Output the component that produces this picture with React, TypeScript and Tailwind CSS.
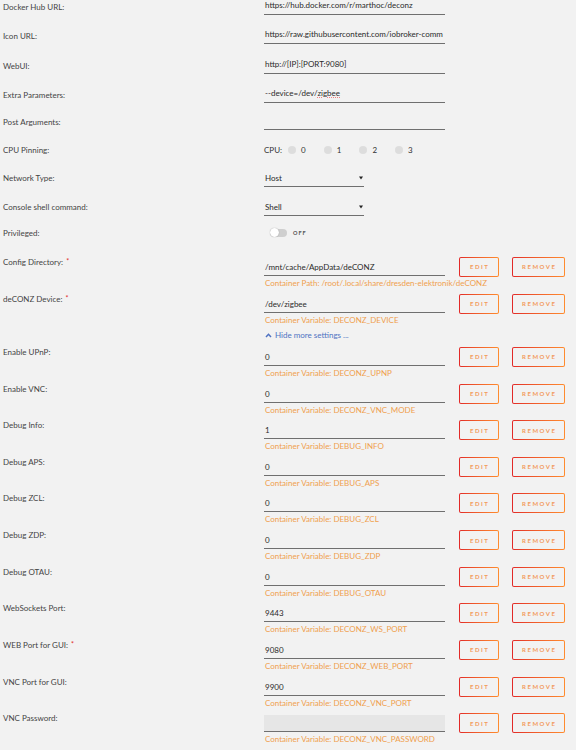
import React from "react";

const font = { fontFamily: "Lato, 'Open Sans', sans-serif" };

function TopRow({ label, value, h, squiggle }: { label: string; value: string; h: number; squiggle?: string }) {
  return (
    <div className="flex items-start" style={{ height: h }}>
      <div className="w-[264px] shrink-0 pl-[3px] text-[8px] leading-[14px] text-[#444]">{label}</div>
      <div className="w-[181px] h-[15px] border-b border-[#6f6f6f] pl-px text-[8px] leading-[11px] text-[#2a2a2a] whitespace-nowrap overflow-hidden">
        {value}
        {squiggle && <span className="underline decoration-dotted decoration-[#f08080]">{squiggle}</span>}
      </div>
    </div>
  );
}

function Btn({ text, w }: { text: string; w: number }) {
  return (
    <div className="rounded-[2px] bg-gradient-to-r from-[#e22828] to-[#ff8c2f] p-px h-[20px]" style={{ width: w }}>
      <div className="h-full w-full rounded-[1px] bg-[#f2f2f2] flex items-center justify-center">
        <span className="text-[6px] font-bold tracking-[1.5px] text-[#f29a5c] pl-[1.5px]">{text}</span>
      </div>
    </div>
  );
}

function VarRow({
  label,
  value,
  note,
  required,
  h = 36.63,
  password,
}: {
  label: string;
  value: string;
  note: string;
  required?: boolean;
  h?: number;
  password?: boolean;
}) {
  return (
    <div className="flex items-start" style={{ height: h }}>
      <div className="w-[264px] shrink-0 pl-[3px] text-[8px] leading-[10px] text-[#444]">
        {label}
        {required && <span className="ml-[3px] text-[7px] text-[#e22828] relative -top-[1px]">*</span>}
      </div>
      <div className="w-[181px] shrink-0 flex flex-col">
        {password ? (
          <div className="mt-[2px] h-[17px] bg-[#e6e6e6] border-b border-[#6f6f6f]"></div>
        ) : (
          <div className="h-[19px] border-b border-[#6f6f6f] pl-px pt-[4px] text-[8px] leading-[13px] text-[#2a2a2a] whitespace-nowrap">
            {value}
          </div>
        )}
        <div className="pl-px text-[8px] leading-[15px] text-[#f0a04e] whitespace-nowrap">{note}</div>
      </div>
      <div className="ml-[14px] flex gap-[13px]">
        <Btn text="EDIT" w={40} />
        <Btn text="REMOVE" w={53} />
      </div>
    </div>
  );
}

function CpuItem({ n }: { n: string }) {
  return (
    <div className="w-[35.7px] flex items-center gap-[5px] shrink-0">
      <div className="w-[8px] h-[8px] rounded-full bg-[#dddddd]"></div>
      <span className="text-[8px] text-[#333]">{n}</span>
    </div>
  );
}

function SelectRow({ label, value, h }: { label: string; value: string; h: number }) {
  return (
    <div className="flex items-start" style={{ height: h }}>
      <div className="w-[264px] shrink-0 pl-[3px] text-[8px] leading-[14px] text-[#444]">{label}</div>
      <div className="w-[100px] h-[16px] border-b border-[#6f6f6f] pl-px flex items-start justify-between text-[8px] leading-[14px] text-[#2a2a2a]">
        <span>{value}</span>
        <svg width="4" height="4" viewBox="0 0 4 4" className="mt-[5px] mr-[1px]">
          <path d="M0 0.5 L4 0.5 L2 3.5 Z" fill="#222" />
        </svg>
      </div>
    </div>
  );
}

export default function App() {
  const vars = [
    { label: "Enable UPnP:", value: "0", note: "Container Variable: DECONZ_UPNP" },
    { label: "Enable VNC:", value: "0", note: "Container Variable: DECONZ_VNC_MODE" },
    { label: "Debug Info:", value: "1", note: "Container Variable: DEBUG_INFO" },
    { label: "Debug APS:", value: "0", note: "Container Variable: DEBUG_APS" },
    { label: "Debug ZCL:", value: "0", note: "Container Variable: DEBUG_ZCL" },
    { label: "Debug ZDP:", value: "0", note: "Container Variable: DEBUG_ZDP" },
    { label: "Debug OTAU:", value: "0", note: "Container Variable: DEBUG_OTAU" },
    { label: "WebSockets Port:", value: "9443", note: "Container Variable: DECONZ_WS_PORT" },
    { label: "WEB Port for GUI:", value: "9080", note: "Container Variable: DECONZ_WEB_PORT", required: true },
    { label: "VNC Port for GUI:", value: "9900", note: "Container Variable: DECONZ_VNC_PORT" },
    { label: "VNC Password:", value: "", note: "Container Variable: DECONZ_VNC_PASSWORD", password: true },
  ];
  return (
    <div className="w-[576px] h-[750px] overflow-hidden bg-[#f2f2f2] flex flex-col" style={font}>
      <TopRow label="Docker Hub URL:" value="https://hub.docker.com/r/marthoc/deconz" h={29} />
      <TopRow label="Icon URL:" value="https://raw.githubusercontent.com/iobroker-comm" h={29.5} />
      <TopRow label="WebUI:" value="http://[IP]:[PORT:9080]" h={29.5} />
      <TopRow label="Extra Parameters:" value="--device=/dev/" squiggle="zigbee" h={27.3} />
      <TopRow label="Post Arguments:" value="" h={28.2} />

      <div className="flex items-start h-[27.2px]">
        <div className="w-[264px] shrink-0 pl-[3px] text-[8px] leading-[14px] text-[#444]">CPU Pinning:</div>
        <div className="flex items-center h-[14px]">
          <span className="text-[8px] text-[#333] mr-[6px]">CPU:</span>
          <CpuItem n="0" />
          <CpuItem n="1" />
          <CpuItem n="2" />
          <CpuItem n="3" />
        </div>
      </div>

      <SelectRow label="Network Type:" value="Host" h={29} />
      <SelectRow label="Console shell command:" value="Shell" h={26.3} />

      <div className="flex items-start h-[30.7px]">
        <div className="w-[264px] shrink-0 pl-[3px] text-[8px] leading-[14px] text-[#444]">Privileged:</div>
        <div className="flex items-center h-[14px] pl-[6px] gap-[6px]">
          <div className="w-[17px] h-[8px] rounded-full bg-[#cfcfcf] relative">
            <div className="absolute left-0 -top-[0.5px] w-[9px] h-[9px] rounded-full bg-white shadow-[0_0_1px_rgba(0,0,0,0.4)]"></div>
          </div>
          <span className="text-[5.5px] tracking-[1px] text-[#555] font-bold">OFF</span>
        </div>
      </div>

      <VarRow
        label="Config Directory:"
        required
        value="/mnt/cache/AppData/deCONZ"
        note="Container Path: /root/.local/share/dresden-elektronik/deCONZ"
        h={37.3}
      />
      <VarRow
        label="deCONZ Device:"
        required
        value="/dev/zigbee"
        note="Container Variable: DECONZ_DEVICE"
        h={33.5}
      />
      <div className="flex h-[19.5px]">
        <div className="w-[264px] shrink-0"></div>
        <div className="flex items-start gap-[3px] pl-px text-[8px] leading-[17px] text-[#4f72c2]">
          <svg width="7" height="17" viewBox="0 0 7 17">
            <path d="M1 10 L3.5 7.3 L6 10" stroke="#4f72c2" strokeWidth="1.5" fill="none" />
          </svg>
          <span>Hide more settings ...</span>
        </div>
      </div>

      {vars.map((v) => (
        <VarRow key={v.label} {...v} />
      ))}
    </div>
  );
}
